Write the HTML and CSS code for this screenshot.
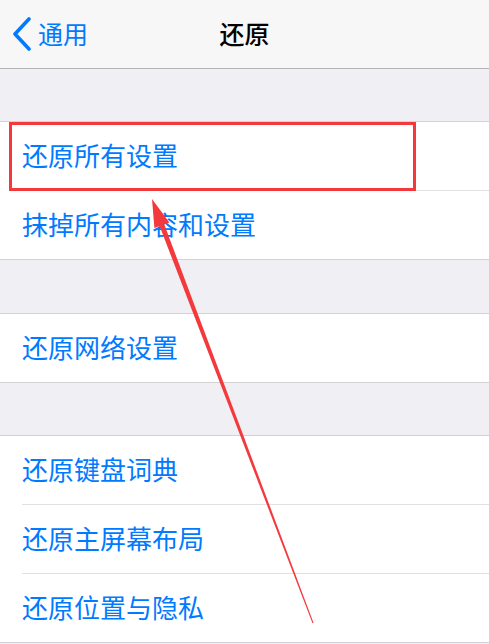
FILE: index.html
```html
<!DOCTYPE html>
<html lang="zh-CN">
<head>
    <meta charset="UTF-8">
    <meta name="viewport" content="width=device-width, initial-scale=1.0">
    <title>还原</title>
    <link rel="stylesheet" href="styles.css">
</head>
<body>

<div class="screen">
    <div class="navbar">
        <a class="back" href="#">
            <svg class="chevron" width="20" height="34" viewBox="0 0 20 34">
                <path d="M17 2 L3 17 L17 32" fill="none" stroke="#007aff" stroke-width="3.6" stroke-linecap="round" stroke-linejoin="round"/>
            </svg>
            <span>通用</span>
        </a>
        <div class="title">还原</div>
        <div></div>
    </div>

    <div class="gap"></div>
    <ul class="group">
        <li>还原所有设置</li>
        <li>抹掉所有内容和设置</li>
    </ul>

    <div class="gap gap-wide"></div>
    <ul class="group">
        <li>还原网络设置</li>
    </ul>

    <div class="gap"></div>
    <ul class="group">
        <li>还原键盘词典</li>
        <li>还原主屏幕布局</li>
        <li>还原位置与隐私</li>
    </ul>

    <!-- annotation: red box + arrow -->
    <svg class="markup" width="489" height="644" viewBox="0 0 489 644">
        <rect x="10.5" y="123.5" width="404" height="66" fill="none" stroke="#f3393c" stroke-width="3"/>
        <polygon points="164.2,224.3 159.6,226.1 312.5,623.2 313.5,622.8" fill="#f3393c"/>
        <polygon points="152,199 169.4,222.4 154.4,228.0" fill="#f3393c"/>
    </svg>
</div>

</body>
</html>
```

FILE: styles.css
```css
body {
    margin: 0;
    background-color: #efeff4;
    font-family: "Noto Sans CJK SC", "Noto Sans", sans-serif;
}
.screen {
    position: relative;
    width: 489px;
    height: 644px;
    overflow: hidden;
}
.navbar {
    display: grid;
    grid-template-columns: 1fr auto 1fr;
    align-items: center;
    height: 68px;
    background-color: #f7f7f8;
    border-bottom: 1px solid #b4b4b7;
}
.back {
    display: flex;
    align-items: center;
    gap: 6px;
    padding-left: 12px;
    color: #007aff;
    text-decoration: none;
    font-size: 25px;
}
.back span {
    margin-top: -3px;
}
.chevron {
    display: block;
}
.title {
    margin-top: -3px;
    font-size: 25px;
    font-weight: 500;
    color: #000;
}
.gap {
    height: 52px;
}
.gap-wide {
    height: 53px;
}
.group {
    list-style: none;
    margin: 0;
    padding: 0;
    background-color: #fff;
    border-top: 1px solid #d1d1d6;
    border-bottom: 1px solid #d1d1d6;
}
.group li {
    display: flex;
    align-items: center;
    box-sizing: border-box;
    height: 68px;
    margin-left: 22px;
    padding-bottom: 4px;
    color: #007aff;
    font-size: 26px;
}
.group li + li {
    height: 69px;
    border-top: 1px solid #e0e0e4;
}
.markup {
    position: absolute;
    top: 0;
    left: 0;
    pointer-events: none;
}
```
